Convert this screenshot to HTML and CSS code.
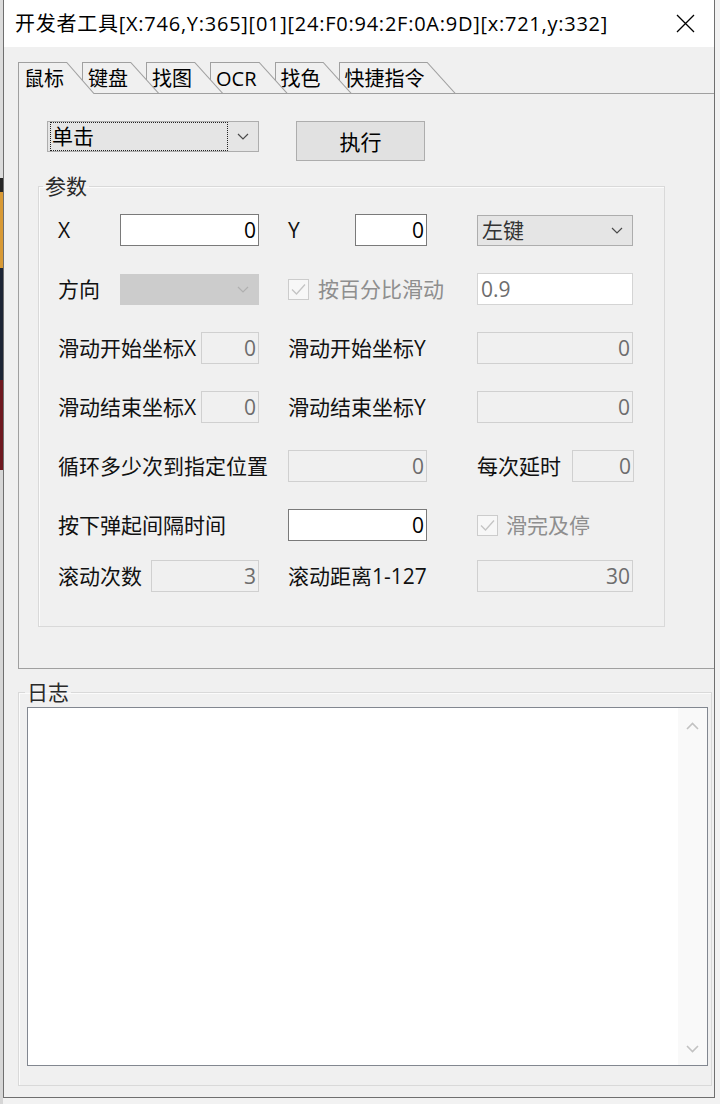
FILE: index.html
```html
<!DOCTYPE html>
<html lang="zh-CN">
<head>
  <meta charset="UTF-8" />
  <meta name="viewport" content="width=device-width, initial-scale=1.0"/>
  <title>开发者工具</title>
  <link rel="stylesheet" href="styles.css">
</head>
<body>
  <div class="wallpaper"></div>

  <div class="window">
    <div class="titlebar">
      <span class="title">开发者工具[X:746,Y:365][01][24:F0:94:2F:0A:9D][x:721,y:332]</span>
      <svg class="close" width="19" height="19" viewBox="0 0 19 19"><path d="M1 1L18 18M18 1L1 18"/></svg>
    </div>

    <div class="tabs">
      <div class="tab active">鼠标</div>
      <div class="tab">键盘</div>
      <div class="tab">找图</div>
      <div class="tab">OCR</div>
      <div class="tab">找色</div>
      <div class="tab">快捷指令</div>
    </div>

    <div class="panel">
      <div class="toolbar">
        <div class="combo mode">
          <span class="focus">单击</span>
          <span class="arrow"><svg width="12" height="7" viewBox="0 0 12 7"><path d="M1 1L6 6L11 1"/></svg></span>
        </div>
        <button class="btn">执行</button>
      </div>

      <fieldset class="group params">
        <legend>参数</legend>
        <div class="rows">
          <div class="row">
            <div class="cell c1"><span class="lbl">X</span><div class="field w139">0</div></div>
            <div class="cell c2"><span class="lbl">Y</span><div class="field w72">0</div></div>
            <div class="cell c3">
              <div class="combo w156"><span class="txt">左键</span><span class="arrow"><svg width="12" height="7" viewBox="0 0 12 7"><path d="M1 1L6 6L11 1"/></svg></span></div>
            </div>
          </div>

          <div class="row">
            <div class="cell c1">
              <span class="lbl">方向</span>
              <div class="combo off w139"><span class="txt"></span><span class="arrow"><svg width="12" height="7" viewBox="0 0 12 7"><path d="M1 1L6 6L11 1"/></svg></span></div>
            </div>
            <div class="cell c2 start">
              <span class="check"><svg width="19" height="19" viewBox="0 0 19 19"><path d="M3 9.5L7.5 14L16 4.5"/></svg></span>
              <span class="lbl muted">按百分比滑动</span>
            </div>
            <div class="cell c3"><div class="field ro w156">0.9</div></div>
          </div>

          <div class="row">
            <div class="cell c1"><span class="lbl">滑动开始坐标X</span><div class="field off w58">0</div></div>
            <div class="cell c2"><span class="lbl">滑动开始坐标Y</span></div>
            <div class="cell c3"><div class="field off w156">0</div></div>
          </div>

          <div class="row">
            <div class="cell c1"><span class="lbl">滑动结束坐标X</span><div class="field off w58">0</div></div>
            <div class="cell c2"><span class="lbl">滑动结束坐标Y</span></div>
            <div class="cell c3"><div class="field off w156">0</div></div>
          </div>

          <div class="row">
            <div class="cell c1"><span class="lbl">循环多少次到指定位置</span></div>
            <div class="cell c2"><div class="field off w139">0</div></div>
            <div class="cell c3"><span class="lbl">每次延时</span><div class="field off w62">0</div></div>
          </div>

          <div class="row">
            <div class="cell c1"><span class="lbl">按下弹起间隔时间</span></div>
            <div class="cell c2"><div class="field w139">0</div></div>
            <div class="cell c3 start">
              <span class="check"><svg width="19" height="19" viewBox="0 0 19 19"><path d="M3 9.5L7.5 14L16 4.5"/></svg></span>
              <span class="lbl muted">滑完及停</span>
            </div>
          </div>

          <div class="row last">
            <div class="cell c1"><span class="lbl">滚动次数</span><div class="field off w108">3</div></div>
            <div class="cell c2"><span class="lbl">滚动距离1-127</span></div>
            <div class="cell c3"><div class="field off w156">30</div></div>
          </div>
        </div>
      </fieldset>
    </div>

    <fieldset class="group log-group">
      <legend>日志</legend>
      <div class="log">
        <div class="vscroll">
          <svg width="13" height="8" viewBox="0 0 13 8"><path d="M1 7L6.5 1.5L12 7"/></svg>
          <svg width="13" height="8" viewBox="0 0 13 8"><path d="M1 1L6.5 6.5L12 1"/></svg>
        </div>
      </div>
    </fieldset>
  </div>
</body>
</html>
```

FILE: styles.css
```css
body {
  margin: 0;
  display: flex;
  align-items: flex-start;
  background: #f2f2f2;
  font-family: "Open Sans", "Noto Sans CJK SC", sans-serif;
  color: #111;
}

/* the desktop that peeks out on the left */
.wallpaper {
  flex: none;
  width: 3px;
  height: 1104px;
  background: linear-gradient(to bottom,
    #dcdcdc 0 178px, #262626 178px 192px, #d99a35 192px 268px,
    #1d2535 268px 380px, #6e1820 380px 470px, #d6d6d6 470px);
}

.window {
  flex: none;
  width: 712px;
  height: 1098px;
  box-sizing: border-box;
  border: 1px solid #6f6f6f;
  border-top: none;
  background: #f0f0f0;
  overflow: hidden;
}

.titlebar {
  height: 47px;
  background: #fff;
  display: flex;
  align-items: center;
  justify-content: space-between;
  padding: 0 19px 0 11px;
}

.title {
  font-size: 20px;
  line-height: 28px;
  letter-spacing: 0.75px;
  color: #000;
  white-space: nowrap;
}

.close path {
  stroke: #000;
  stroke-width: 1.3;
  fill: none;
}

/* tabs */
.tabs {
  display: flex;
  height: 31px;
  margin-top: 15px;
  padding-left: 14px;
}

.tab {
  position: relative;
  height: 31px;
  box-sizing: border-box;
  padding: 0 31px 0 6px;
  margin-left: -13px;
  font-size: 20px;
  line-height: 33px;
  color: #000;
  white-space: nowrap;
  background: #a0a0a0;
  clip-path: polygon(0 0, calc(100% - 28px) 0, 100% 100%, 0 100%);
}

.tab::before {
  content: "";
  position: absolute;
  top: 1px; left: 1px; right: 0; bottom: 0;
  background: #f0f0f0;
  clip-path: polygon(0 0, calc(100% - 28.45px) 0, calc(100% - 1.36px) 100%, 0 100%);
  z-index: -1;
}

.tab:first-child { margin-left: 0; }
.tab.active { height: 32px; z-index: 7; }
.tab:nth-child(2) { z-index: 6; }
.tab:nth-child(3) { z-index: 5; }
.tab:nth-child(4) { z-index: 4; }
.tab:nth-child(5) { z-index: 3; }
.tab:nth-child(6) { z-index: 2; }

.panel {
  height: 576px;
  box-sizing: border-box;
  margin-left: 14px;
  border: 1px solid #a0a0a0;
  border-right: none;
}

.toolbar {
  display: flex;
  align-items: flex-start;
  margin: 27px 0 0 28px;
}

/* combo boxes */
.combo {
  display: flex;
  align-items: center;
  box-sizing: border-box;
  height: 31px;
  border: 1px solid #adadad;
  background: #e5e5e5;
  font-size: 21px;
  line-height: 27px;
  color: #000;
}

.combo.mode { width: 212px; }

.combo .focus {
  flex: 1;
  height: 27px;
  margin: 0 0 0 2px;
  padding-left: 1px;
  border: 1px dotted #222;
}

.combo .txt {
  flex: 1;
  padding-left: 4px;
  color: #333;
}

.combo .arrow {
  width: 30px;
  display: flex;
  justify-content: center;
}

.arrow path {
  stroke: #4a4a4a;
  stroke-width: 1.2;
  fill: none;
}

.combo.off {
  background: #cccccc;
  border-color: #cccccc;
}

.combo.off .arrow path { stroke: #b0b0b0; }

.btn {
  width: 129px;
  height: 40px;
  margin-left: 37px;
  border: 1px solid #adadad;
  background: #e1e1e1;
  font-family: inherit;
  font-size: 21px;
  color: #000;
  padding: 0;
}

/* group boxes */
.group {
  margin: 0;
  padding: 0;
  min-width: 0;
  border: 1px solid #d9d9d9;
  box-shadow: inset 1px 1px 0 #fbfbfb;
}

.group legend {
  margin-left: 4px;
  padding: 0 2px;
  font-size: 21px;
  line-height: 28px;
  color: #2a2a2a;
}

.params {
  width: 627px;
  box-sizing: border-box;
  margin: 11px 0 0 19px;
  padding-bottom: 34px;
}

.rows {
  margin-top: 14px;
}

.row {
  display: flex;
  align-items: center;
  height: 32px;
  padding-left: 19px;
}

.row + .row { margin-top: 27px; }
.row.last { margin-top: 19px; }

.cell {
  display: flex;
  align-items: center;
  justify-content: space-between;
  white-space: nowrap;
}

.cell.start { justify-content: flex-start; gap: 9px; }

.c1 { width: 201px; margin-right: 29px; }
.c2 { width: 139px; margin-right: 50px; }
.c3 { width: 157px; }
.c3.start { gap: 8px; }

.lbl {
  font-size: 21px;
  line-height: 32px;
  color: #111;
}

.lbl.muted { color: #8e8e8e; }

.check {
  display: flex;
  width: 21px;
  height: 21px;
  box-sizing: border-box;
  border: 1px solid #cccccc;
  background: #f7f7f7;
  align-items: center;
  justify-content: center;
}

.check path {
  stroke: #c4c4c4;
  stroke-width: 1.3;
  fill: none;
}

/* text fields */
.field {
  box-sizing: border-box;
  height: 32px;
  border: 1px solid #7a7a7a;
  background: #fff;
  padding: 0 2px;
  text-align: right;
  font-size: 21px;
  line-height: 30px;
  color: #000;
}

.field.off {
  background: #f0f0f0;
  border-color: #d0d0d0;
  color: #6d6d6d;
}

.field.ro {
  border-color: #d4d4d4;
  text-align: left;
  padding-left: 3px;
  color: #6d6d6d;
}

.w58 { width: 58px; }
.w62 { width: 62px; }
.w72 { width: 72px; }
.w108 { width: 108px; }
.w139 { width: 139px; }
.w156 { width: 156px; }

/* log */
.log-group {
  margin: 9px 2px 0 14px;
}

.log-group legend { margin-left: 6px; }

.log {
  display: flex;
  justify-content: flex-end;
  height: 359px;
  box-sizing: border-box;
  margin: 1px 3px 19px 8px;
  border: 1px solid #828790;
  background: #fff;
}

.vscroll {
  width: 29px;
  display: flex;
  flex-direction: column;
  justify-content: space-between;
  align-items: center;
  padding: 14px 0 12px;
  background: #f9f9f9;
}

.vscroll path {
  stroke: #c2c2c2;
  stroke-width: 1.6;
  fill: none;
}
```
